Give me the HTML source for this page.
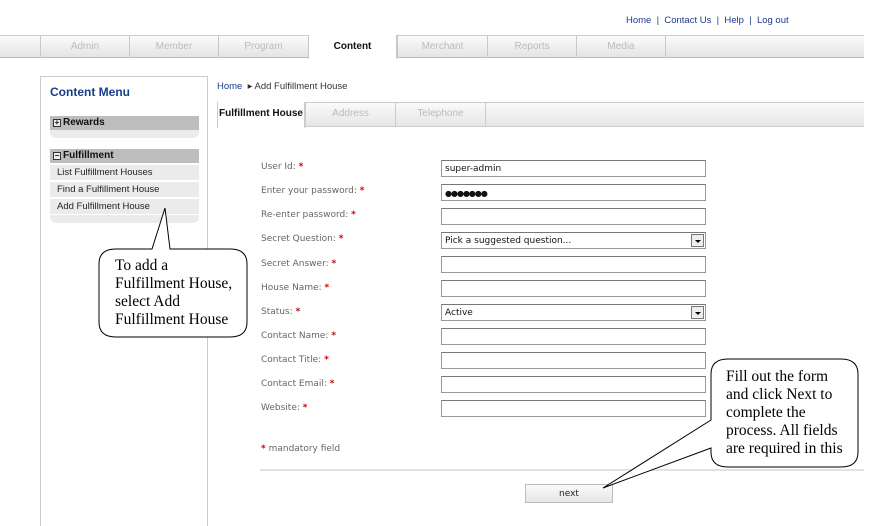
<!DOCTYPE html>
<html><head><style>
*{margin:0;padding:0;box-sizing:border-box}
body{width:882px;height:515px;background:#fff;position:relative;overflow:hidden;font-family:"DejaVu Sans","Liberation Sans",sans-serif;font-size:9px;color:#555}
.a{position:absolute}
.top{left:626px;top:15px;font-size:9.5px;color:#1a3c8c;font-family:"Liberation Sans",sans-serif}
.nav{left:0;top:35px;width:864px;height:23px;background:linear-gradient(#fbfbfb,#e4e4e4);border-top:1px solid #ccc;border-bottom:1px solid #bbb}
.tab{top:35px;height:23px;border-left:1px solid #c8c8c8;color:#bbb;font-size:10px;text-align:center;line-height:24px;font-family:"Liberation Sans",sans-serif}
.act{background:#fff;color:#111;font-weight:bold;height:24px;border-bottom:none;border-right:1px solid #c8c8c8}
.lp{left:40px;top:76px;width:168px;height:450px;border:1px solid #ccc;border-bottom:none}
.bar{left:50px;width:149px;height:14px;background:#bdbdbd;color:#111;font-weight:bold;font-size:10px;line-height:14px;padding-left:13px;font-family:"Liberation Sans",sans-serif}
.pm{position:absolute;left:3px;top:3px;width:8px;height:8px;border:1px solid #333;background:#eee;font-size:8px;line-height:6px;text-align:center;font-weight:bold}
.it{left:50px;width:149px;height:15px;background:#ebebeb;color:#222;font-size:9.5px;line-height:15px;padding-left:7px;font-family:"Liberation Sans",sans-serif}
.rb{left:50px;width:149px;height:8px;background:#ebebeb;border-radius:0 0 6px 6px}
.lab{left:261px;font-size:9px;color:#666}
.lab b{color:#c00}
.in{left:441px;width:265px;height:17px;border:1px solid #999;border-top-color:#777;background:#fff;font-size:9px;color:#111;padding-left:3px;line-height:17px}
.dd{position:absolute;right:1px;top:1px;width:13px;height:13px;border:1px solid #777;background:#eee}
.dd:after{content:"";position:absolute;left:3px;top:5px;border:3px solid transparent;border-top:3px solid #000}
.sub{top:102px;height:25px;border-left:1px solid #ccc;color:#bbb;font-size:10px;line-height:24px;text-align:center;font-family:"Liberation Sans",sans-serif}
.call{font-family:"Liberation Serif",serif;font-size:15.5px;color:#000;line-height:18px}
</style></head><body>
<div class="a top">Home &nbsp;|&nbsp; Contact Us &nbsp;|&nbsp; Help &nbsp;|&nbsp; Log out</div>
<div class="a nav"></div>
<div class="a tab" style="left:40px;width:89px">Admin</div>
<div class="a tab" style="left:129px;width:89px">Member</div>
<div class="a tab" style="left:218px;width:90px">Program</div>
<div class="a tab act" style="left:308px;width:89px">Content</div>
<div class="a tab" style="left:397px;width:90px">Merchant</div>
<div class="a tab" style="left:487px;width:89px">Reports</div>
<div class="a tab" style="left:576px;width:89px">Media</div>
<div class="a tab" style="left:665px;width:1px"></div>

<div class="a lp"></div>
<div class="a" style="left:50px;top:85px;font-size:12px;font-weight:bold;color:#1a3c8c;font-family:'Liberation Sans',sans-serif">Content Menu</div>
<div class="a bar" style="top:116px"><span class="pm">+</span>Rewards</div>
<div class="a rb" style="top:130px"></div>
<div class="a bar" style="top:149px"><span class="pm">−</span>Fulfillment</div>
<div class="a it" style="top:165px">List Fulfillment Houses</div>
<div class="a it" style="top:182px">Find a Fulfillment House</div>
<div class="a it" style="top:199px">Add Fulfillment House</div>
<div class="a rb" style="top:215px"></div>

<div class="a" style="left:217px;top:81px;font-size:9.5px;color:#333;font-family:'Liberation Sans',sans-serif"><span style="color:#1a3c8c">Home</span> &nbsp;▸ Add Fulfillment House</div>
<div class="a" style="left:217px;top:102px;width:647px;height:25px;background:linear-gradient(#fafafa,#e6e6e6);border-top:1px solid #ccc;border-bottom:1px solid #ccc"></div>
<div class="a sub" style="left:217px;width:88px;background:#fff;color:#111;font-weight:bold;height:26px;border-right:1px solid #ccc">Fulfillment House</div>
<div class="a sub" style="left:305px;width:90px">Address</div>
<div class="a sub" style="left:395px;width:90px">Telephone</div>
<div class="a sub" style="left:485px;width:1px"></div>

<div class="a lab" style="top:162px">User Id: <b>*</b></div>
<div class="a lab" style="top:186px">Enter your password: <b>*</b></div>
<div class="a lab" style="top:210px">Re-enter password: <b>*</b></div>
<div class="a lab" style="top:234px">Secret Question: <b>*</b></div>
<div class="a lab" style="top:259px">Secret Answer: <b>*</b></div>
<div class="a lab" style="top:283px">House Name: <b>*</b></div>
<div class="a lab" style="top:307px">Status: <b>*</b></div>
<div class="a lab" style="top:331px">Contact Name: <b>*</b></div>
<div class="a lab" style="top:355px">Contact Title: <b>*</b></div>
<div class="a lab" style="top:379px">Contact Email: <b>*</b></div>
<div class="a lab" style="top:403px">Website: <b>*</b></div>

<div class="a in" style="top:160px">super-admin</div>
<div class="a in" style="top:184px;font-weight:bold;font-size:8px;letter-spacing:-1px">●●●●●●●</div>
<div class="a in" style="top:208px"></div>
<div class="a in" style="top:232px">Pick a suggested question...<span class="dd"></span></div>
<div class="a in" style="top:256px"></div>
<div class="a in" style="top:280px"></div>
<div class="a in" style="top:304px">Active<span class="dd"></span></div>
<div class="a in" style="top:328px"></div>
<div class="a in" style="top:352px"></div>
<div class="a in" style="top:376px"></div>
<div class="a in" style="top:400px"></div>

<div class="a lab" style="top:444px"><b>*</b> mandatory field</div>
<div class="a" style="left:260px;top:469px;width:604px;height:2px;background:#e2e2e2"></div>
<div class="a" style="left:525px;top:484px;width:88px;height:19px;border:1px solid #bbb;background:linear-gradient(#fafafa,#e5e5e5);text-align:center;font-size:9px;line-height:18px;color:#222">next</div>

<svg class="a" style="left:0;top:0" width="882" height="515">
<path d="M125,249 L152,249 L165,208 L170,249 L230,249 Q247,249 247,264 L247,322 Q247,337 230,337 L116,337 Q99,337 99,322 L99,264 Q99,249 116,249 Z" fill="#fff" stroke="#000" stroke-width="1"/>
<path d="M728,359 L841,359 Q858,359 858,374 L858,452 Q858,467 841,467 L728,467 Q711,467 711,452 L711,448 L603,488 L711,420 L711,374 Q711,359 728,359 Z" fill="#fff" stroke="#000" stroke-width="1"/>
</svg>
<div class="a call" style="left:115px;top:257px">To add a<br>Fulfillment House,<br>select Add<br>Fulfillment House</div>
<div class="a call" style="left:726px;top:368px">Fill out the form<br>and click Next to<br>complete the<br>process. All fields<br>are required in this</div>
</body></html>
